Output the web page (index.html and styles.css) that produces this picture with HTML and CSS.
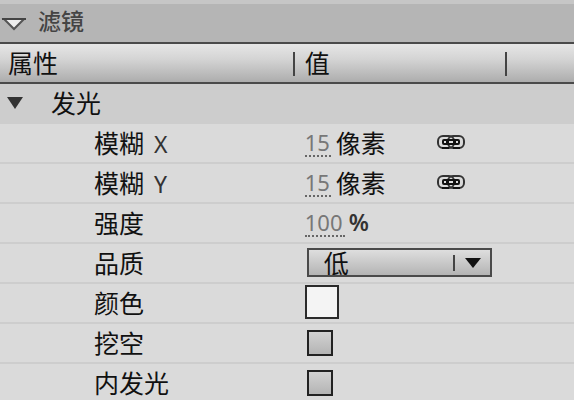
FILE: index.html
```
<!DOCTYPE html>
<html lang="zh-CN">
<head>
<meta charset="utf-8">
<title>滤镜</title>
<link rel="stylesheet" href="styles.css">
</head>

<body>

<!-- Panel title -->
<div class="titlebar">
<button type="button" class="toggle" aria-label="折叠">
<svg width="26" height="16" viewBox="0 0 26 16"><path d="M4 2H24L14 12Z" fill="#eee" stroke="#555" stroke-width="2"/><path d="M2 2H26" stroke="#444" stroke-width="2"/></svg>
</button>
<h1>滤镜</h1>
</div>

<table class="props">
<thead>
<tr>
<th class="name">属性</th>
<th class="value">值</th>
<th class="rest"></th>
</tr>
</thead>
<tbody>

<!-- Filter name -->
<tr class="group">
<td colspan="3">
<div class="cell">
<button type="button" class="toggle" aria-label="展开">
<svg width="18" height="14" viewBox="0 0 18 14"><path d="M1 2H17L9 14Z" fill="#333"/></svg>
</button>
<span>发光</span>
</div>
</td>
</tr>

<tr>
<td class="label"><label for="blurx">模糊<span class="axis">X</span></label></td>
<td colspan="2">
<div class="cell">
<input type="text" id="blurx" class="num" value="15"><span class="unit">像素</span>
<button type="button" class="link" aria-label="链接">
<svg width="30" height="18" viewBox="0 0 30 18"><g fill="none" stroke="#333" stroke-width="2"><rect x="2" y="3" width="16" height="12" rx="5"/><rect x="12" y="3" width="16" height="12" rx="5"/></g><rect x="6" y="6" width="18" height="6" rx="2" fill="#111"/><path d="M8 9H10M13 9H17M20 9H22" stroke="#ddd" stroke-width="2"/><path d="M6 15H13M17 15H24" stroke="#111" stroke-width="2"/></svg>
</button>
</div>
</td>
</tr>

<tr>
<td class="label"><label for="blury">模糊<span class="axis">Y</span></label></td>
<td colspan="2">
<div class="cell">
<input type="text" id="blury" class="num" value="15"><span class="unit">像素</span>
<button type="button" class="link" aria-label="链接">
<svg width="30" height="18" viewBox="0 0 30 18"><g fill="none" stroke="#333" stroke-width="2"><rect x="2" y="3" width="16" height="12" rx="5"/><rect x="12" y="3" width="16" height="12" rx="5"/></g><rect x="6" y="6" width="18" height="6" rx="2" fill="#111"/><path d="M8 9H10M13 9H17M20 9H22" stroke="#ddd" stroke-width="2"/><path d="M6 15H13M17 15H24" stroke="#111" stroke-width="2"/></svg>
</button>
</div>
</td>
</tr>

<tr>
<td class="label"><label for="strength">强度</label></td>
<td colspan="2">
<div class="cell">
<input type="text" id="strength" class="num wide" value="100"><span class="percent">%</span>
</div>
</td>
</tr>

<tr>
<td class="label"><label for="quality">品质</label></td>
<td colspan="2">
<div class="cell">
<div class="dropdown">
<select id="quality">
<option>低</option>
</select>
<svg class="arrow" width="32" height="20" viewBox="0 0 32 20"><path d="M2 2V18" stroke="#444" stroke-width="2"/><path d="M13 5H29L21 15Z" fill="#111"/></svg>
</div>
</div>
</td>
</tr>

<tr>
<td class="label"><label for="color">颜色</label></td>
<td colspan="2"><div class="cell"><input type="color" id="color" class="swatch" value="#f4f4f4"></div></td>
</tr>

<tr>
<td class="label"><label for="knockout">挖空</label></td>
<td colspan="2"><div class="cell"><input type="checkbox" id="knockout" class="check"></div></td>
</tr>

<tr>
<td class="label"><label for="inner">内发光</label></td>
<td colspan="2"><div class="cell"><input type="checkbox" id="inner" class="check"></div></td>
</tr>

</tbody>
</table>

</body>
</html>
```

FILE: styles.css
```
* {
  box-sizing: border-box;
}

body {
  margin: 0;
  overflow: hidden;
  background: #dadada;
  color: #111;
  font-family: "Noto Sans CJK SC", sans-serif;
  font-size: 25px;
  line-height: 34px;
}

button {
  display: flex;
  padding: 0;
  border: 0;
  background: none;
}

/* Title bar */
.titlebar {
  display: flex;
  align-items: center;
  gap: 12px;
  height: 42px;
  border-top: 4px solid #c6c6c6;
  background: #b5b5b5;
}

.titlebar .toggle {
  margin-top: 4px;
}

.titlebar h1 {
  margin: 0;
  padding-bottom: 6px;
  color: #444;
  font-size: 23px;
  font-weight: 500;
}

/* Property table */
.props {
  width: 100%;
  border-collapse: separate;
  border-spacing: 0;
  table-layout: fixed;
}

.props th {
  height: 42px;
  padding: 0 0 2px 8px;
  border-top: 2px solid #4a4a4a;
  border-bottom: 2px solid #4a4a4a;
  background: linear-gradient(#e6e6e6, #d4d4d4 40%, #adadad);
  font-weight: 400;
  text-align: left;
}

.name {
  width: 51%;
}

.value {
  width: 37%;
}

/* Short divider between the header cells */
.props .value,
.props .rest {
  background: linear-gradient(#444, #444) 0 8px / 2px 24px no-repeat, linear-gradient(#e6e6e6, #d4d4d4 40%, #adadad);
}

.props .value {
  padding-left: 12px;
}

.props td {
  height: 40px;
  padding: 0 0 2px 12px;
  border-bottom: 2px solid #cdcdcd;
}

.props .label {
  padding-left: 94px;
}

.props .group td {
  padding-left: 6px;
  background: #cdcdcd;
}

.group .cell {
  gap: 27px;
}

.cell {
  display: flex;
  align-items: center;
}

.axis {
  margin-left: 10px;
  color: #333;
  font-family: "Noto Sans", sans-serif;
  font-size: 23px;
  line-height: 1;
}

/* Editable number with dotted underline */
.num {
  width: 26px;
  height: 28px;
  margin-top: 2px;
  padding: 0;
  border: 0;
  border-bottom: 2px dotted #666;
  background: none;
  color: #777;
  font-family: "Noto Sans", sans-serif;
  font-size: 22px;
}

.wide {
  width: 40px;
}

.unit {
  margin-left: 5px;
}

.percent {
  margin-left: 4px;
  color: #333;
  font-family: "Noto Sans", sans-serif;
  font-size: 23px;
  font-weight: 600;
}

.link {
  margin-left: 50px;
}

.dropdown {
  position: relative;
  margin-left: 2px;
}

.dropdown select {
  display: block;
  appearance: none;
  width: 185px;
  height: 29px;
  padding: 0 40px 0 15px;
  border: 2px solid #4a4a4a;
  border-radius: 0;
  background: linear-gradient(#dedede, #b4b4b4);
  color: #111;
  font-family: "Noto Sans CJK SC", sans-serif;
  font-size: 25px;
  line-height: 25px;
}

.arrow {
  position: absolute;
  top: 5px;
  right: 8px;
  pointer-events: none;
}

.swatch {
  appearance: none;
  width: 34px;
  height: 34px;
  padding: 0;
  border: 2px solid #2b2b2b;
  background: #f4f4f4;
}

.swatch::-webkit-color-swatch-wrapper {
  padding: 0;
}

.swatch::-webkit-color-swatch {
  border: 0;
}

.check {
  appearance: none;
  width: 26px;
  height: 26px;
  margin: 2px 0 0 2px;
  border: 2px solid #222;
  background: linear-gradient(#d2d2d2, #b4b4b4);
}
```
